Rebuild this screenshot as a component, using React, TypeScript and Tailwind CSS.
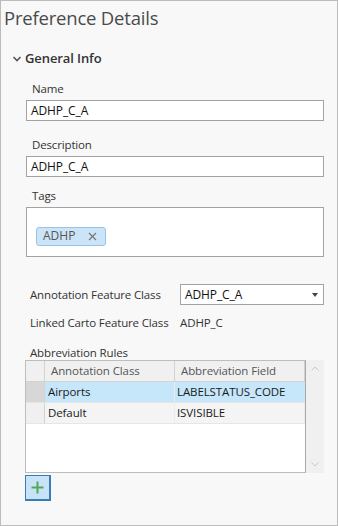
import React from "react";

const font = { fontFamily: '"Open Sans", "Noto Sans", sans-serif' };

function Label({ children, className = "" }: { children: React.ReactNode; className?: string }) {
  return <div className={`text-[11.5px] tracking-[-0.15px] leading-[16px] text-[#333333] ${className}`}>{children}</div>;
}

function TextBox({ value }: { value: string }) {
  return (
    <div className="h-[21px] border border-[#a3a3a3] bg-white pl-[4px] text-[12px] tracking-[-0.1px] leading-[19px] text-[#111111]">
      {value}
    </div>
  );
}

const rows = [
  { cls: "Airports", field: "LABELSTATUS_CODE", selected: true },
  { cls: "Default", field: "ISVISIBLE", selected: false },
];

export default function App() {
  return (
    <div style={font} className="w-[338px] h-[526px] bg-[#f8f8f8] border border-[#bcbcbc] overflow-hidden">
      <div className="pl-[3px] pt-[3px] h-[40px] text-[18.5px] tracking-[-0.2px] leading-[28px] text-[#4a4a4a]">Preference Details</div>

      {/* section header */}
      <div className="flex items-center h-[36px] pl-[11px]">
        <svg width="10" height="8" viewBox="0 0 10 8" className="mr-[3px]">
          <path d="M1.5 2 L5 5.5 L8.5 2" fill="none" stroke="#555" strokeWidth="1.6" />
        </svg>
        <span className="text-[13px] font-semibold tracking-[-0.1px] text-[#333333]">General Info</span>
      </div>

      <div className="pl-[25px] pr-[13px]">
        <Label className="pl-[6px] pt-[4px] h-[23px]">Name</Label>
        <TextBox value="ADHP_C_A" />
        <Label className="pl-[6px] pt-[16px] h-[35px]">Description</Label>
        <TextBox value="ADHP_C_A" />
        <Label className="pl-[6px] pt-[11px] h-[30px]">Tags</Label>
        <div className="h-[50px] border border-[#a3a3a3] bg-white pt-[14px] pl-[9px]">
          <div className="inline-flex items-center h-[19px] rounded-[3px] border border-[#98c3e6] bg-[#cce4f7] pl-[6px] pr-[8px] text-[12px] text-[#555555]">
            ADHP
            <svg width="9" height="9" viewBox="0 0 9 9" className="ml-[13px]">
              <path d="M1 1 L8 8 M8 1 L1 8" stroke="#777" strokeWidth="1.2" />
            </svg>
          </div>
        </div>

        <div className="flex items-center mt-[27px] h-[21px]">
          <Label className="w-[154px] pl-[4px]">Annotation Feature Class</Label>
          <div className="flex-1 h-[21px] border border-[#a3a3a3] bg-white pl-[4px] flex items-center justify-between pr-[5px]">
            <span className="text-[12px] tracking-[-0.1px] text-[#111111]">ADHP_C_A</span>
            <svg width="6" height="4" viewBox="0 0 6 4">
              <path d="M0 0 H6 L3 4 Z" fill="#444" />
            </svg>
          </div>
        </div>

        <div className="flex items-center h-[16px] mt-[10px]">
          <Label className="w-[154px] pl-[4px]">Linked Carto Feature Class</Label>
          <span className="text-[11.5px] tracking-[-0.1px] text-[#333333]">ADHP_C</span>
        </div>

        <Label className="pl-[4px] mt-[14px] h-[15px] leading-[14px]">Abbreviation Rules</Label>

        {/* grid + scrollbar */}
        <div className="flex h-[113px] -ml-[1px]">
          <div className="w-[283px] border border-[#bdbdbd] border-r-[#a8a8a8] bg-white flex flex-col text-[11.5px] tracking-[-0.1px]">
            <div className="flex h-[21px] bg-[#f0f0f0] border-b border-[#d2d2d2] text-[#555555]">
              <div className="w-[19px] border-r border-[#d2d2d2]" />
              <div className="w-[130px] border-r border-[#d2d2d2] pl-[6px] leading-[20px]">Annotation Class</div>
              <div className="w-[130px] border-r border-[#d2d2d2] pl-[6px] leading-[20px]">Abbreviation Field</div>
            </div>
            {rows.map((r) => (
              <div key={r.cls} className={`flex h-[21px] border-b border-[#e6e6e6] text-[#1a1a1a] ${r.selected ? "bg-[#c6e6fa]" : "bg-[#f4f4f4]"}`}>
                <div className={`w-[19px] border-r border-[#d2d2d2] ${r.selected ? "bg-[#d7d7d7]" : "bg-[#f0f0f0]"}`} />
                <div className="w-[130px] border-r border-[#ececec] pl-[3px] leading-[20px]">{r.cls}</div>
                <div className={`w-[130px] pl-[2px] leading-[20px] ${r.selected ? "" : "border-r border-[#ececec]"}`}>{r.field}</div>
              </div>
            ))}
          </div>
          <div className="w-[18px] bg-[#f0f0f0] flex flex-col items-center justify-between py-[6px]">
            <svg width="8" height="5" viewBox="0 0 8 5">
              <path d="M0.5 4.5 L4 1 L7.5 4.5" fill="none" stroke="#c8c8c8" strokeWidth="1" />
            </svg>
            <svg width="8" height="5" viewBox="0 0 8 5">
              <path d="M0.5 0.5 L4 4 L7.5 0.5" fill="none" stroke="#c8c8c8" strokeWidth="1" />
            </svg>
          </div>
        </div>

        <div className="-ml-[1px] mt-[2px] w-[26px] h-[26px] bg-[#c6e3f7] border border-[#3a7db4] border-r-2 border-b-2 flex items-center justify-center">
          <svg width="13" height="13" viewBox="0 0 13 13">
            <path d="M6.5 0.5 V12.5 M0.5 6.5 H12.5" stroke="#58a55a" strokeWidth="2" />
          </svg>
        </div>
      </div>
    </div>
  );
}
